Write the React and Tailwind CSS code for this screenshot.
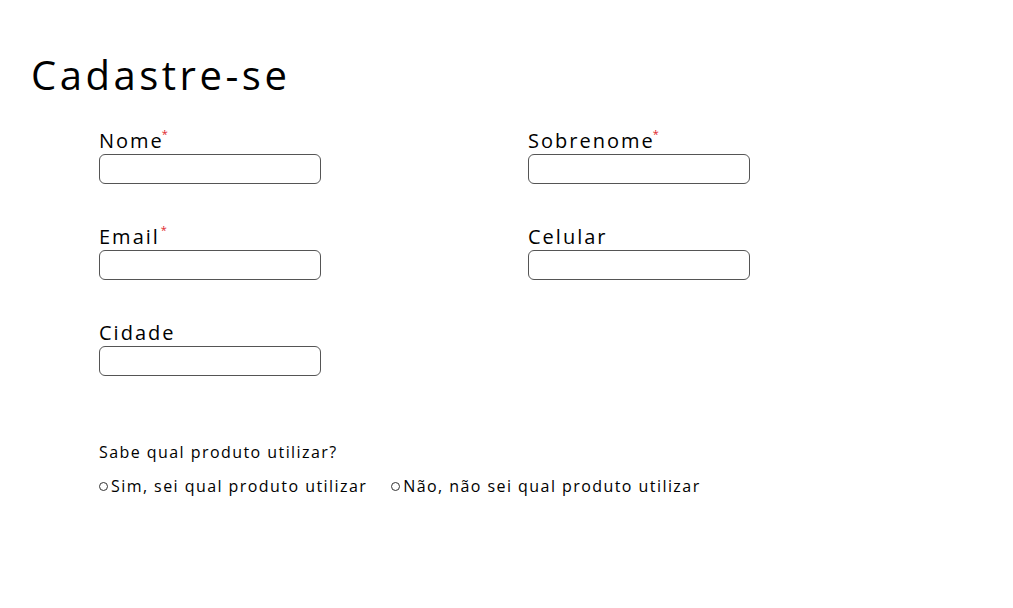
import React from "react";

function Field({ label, required, extraGap }) {
  return (
    <div className="flex flex-col">
      <label className="text-[20px] leading-[24px] tracking-[0.1em] text-black">
        {label}
        {required && (
          <span className={`text-[11px] align-top leading-none tracking-normal text-[#e0262b] relative top-[-1px] ${extraGap ? "ml-[1px]" : "ml-[-2px]"}`}>*</span>
        )}
      </label>
      <input
        type="text"
        className="mt-[1px] w-[222px] h-[30px] rounded-[6px] border border-[#555] bg-white outline-none px-2"
      />
    </div>
  );
}

function Radio({ label }) {
  return (
    <label className="flex items-center">
      <input
        type="radio"
        name="produto"
        className="appearance-none w-[9px] h-[9px] rounded-full border border-[#333] bg-white mr-[3px] mt-[1px]"
      />
      <span>{label}</span>
    </label>
  );
}

export default function App() {
  return (
    <div className="min-h-[608px] w-[1013px] bg-white text-black" style={{ fontFamily: '"Open Sans", sans-serif' }}>
      <h1 className="pl-[31px] pt-[51px] text-[40px] leading-[48px] tracking-[0.088em] font-normal">Cadastre-se</h1>
      <div className="pl-[99px] pt-[30px]">
        <div className="grid grid-cols-[429px_222px] gap-y-[41px]">
          <Field label="Nome" required />
          <Field label="Sobrenome" required />
          <Field label="Email" required extraGap />
          <Field label="Celular" />
          <Field label="Cidade" />
        </div>
        <div className="mt-[64px] text-[16px] leading-[24px] tracking-[0.09em]">
          <p>Sabe qual produto utilizar?</p>
          <div className="mt-[10px] flex gap-[24px]">
            <Radio label="Sim, sei qual produto utilizar" />
            <Radio label="Não, não sei qual produto utilizar" />
          </div>
        </div>
      </div>
    </div>
  );
}
